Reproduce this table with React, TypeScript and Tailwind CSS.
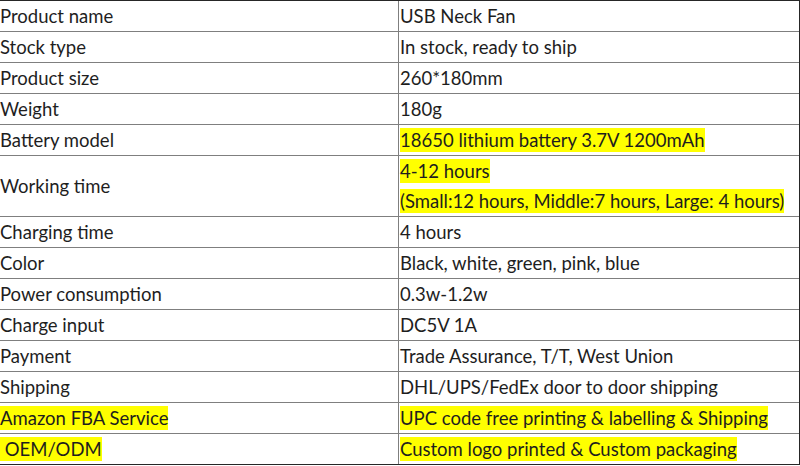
const rows: { label: string; value: string[]; hlLabel?: boolean; hlValue?: boolean }[] = [
  { label: "Product name", value: ["USB Neck Fan"] },
  { label: "Stock type", value: ["In stock, ready to ship"] },
  { label: "Product size", value: ["260*180mm"] },
  { label: "Weight", value: ["180g"] },
  { label: "Battery model", value: ["18650 lithium battery 3.7V 1200mAh"], hlValue: true },
  { label: "Working time", value: ["4-12 hours", "(Small:12 hours, Middle:7 hours, Large: 4 hours)"], hlValue: true },
  { label: "Charging time", value: ["4 hours"] },
  { label: "Color", value: ["Black, white, green, pink, blue"] },
  { label: "Power consumption", value: ["0.3w-1.2w"] },
  { label: "Charge input", value: ["DC5V 1A"] },
  { label: "Payment", value: ["Trade Assurance, T/T, West Union"] },
  { label: "Shipping", value: ["DHL/UPS/FedEx door to door shipping"] },
  { label: "Amazon FBA Service", value: ["UPC code free printing & labelling & Shipping"], hlLabel: true, hlValue: true },
  { label: "\u00a0OEM/ODM", value: ["Custom logo printed & Custom packaging"], hlLabel: true, hlValue: true },
];

function Text({ children, hl }: { children: React.ReactNode; hl?: boolean }) {
  return (
    <span className={hl ? "bg-[#ffff00] py-[2px] leading-[20px]" : "leading-[20px]"}>{children}</span>
  );
}

export default function App() {
  return (
    <div
      className="w-[800px] bg-white text-[18.5px] text-[#1e1e1e] border-t border-r border-b border-[#262626]"
      style={{ fontFamily: "Lato, 'Open Sans', sans-serif" }}
    >
      {rows.map((r, i) => (
        <div
          key={r.label}
          className={
            "grid grid-cols-[399px_1fr] " + (i < rows.length - 1 ? "border-b border-[#7f7f7f]" : "")
          }
        >
          <div className="border-r border-[#7f7f7f] flex items-center min-h-[30px] whitespace-pre">
            <Text hl={r.hlLabel}>{r.label}</Text>
          </div>
          <div className="flex flex-col justify-center pl-px">
            {r.value.map((v) => (
              <div key={v} className="h-[30px] flex items-center">
                <Text hl={r.hlValue}>{v}</Text>
              </div>
            ))}
          </div>
        </div>
      ))}
    </div>
  );
}
